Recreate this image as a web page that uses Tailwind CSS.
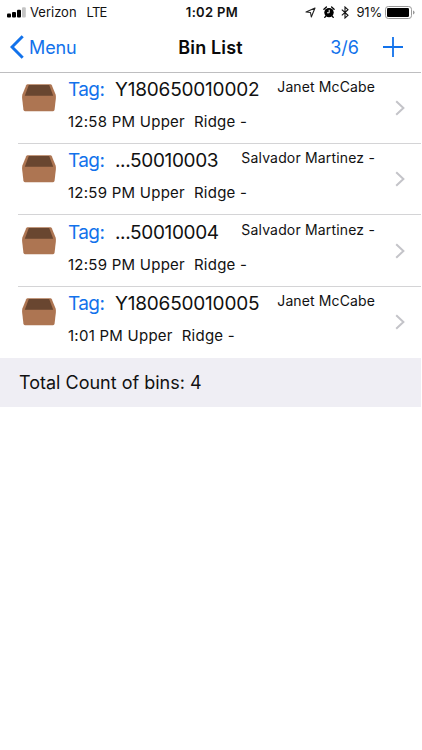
<!DOCTYPE html>
<html lang="en">
<head>
  <meta charset="UTF-8">
  <meta name="viewport" content="width=device-width, initial-scale=1.0">
  <title>Bin List</title>
  <script src="https://cdn.jsdelivr.net/npm/@tailwindcss/browser@4"></script>
</head>
<body class="bg-white text-[#111] font-['Inter',sans-serif]">
  <svg class="hidden">
    <symbol id="bin" viewBox="0 0 34 28">
      <path d="M5.6 0.3H28.4Q29.4 0.3 29.8 1.2L33.6 10.6Q34 12 33.9 14L32.6 25.6Q32.4 27.3 31 27.3H3Q1.6 27.3 1.4 25.6L0.1 14Q0 12 0.4 10.6L4.2 1.2Q4.6 0.3 5.6 0.3Z" fill="#ad7552"/>
      <path d="M6.8 1H27.2L31.2 11.8H2.8Z" fill="#694630"/>
    </symbol>
    <symbol id="chevron" viewBox="0 0 10 16">
      <path d="M1.2 1.2L8.4 8L1.2 14.8" fill="none" stroke="#c4c4c9" stroke-width="2"/>
    </symbol>
  </svg>

  <div class="w-[421px]">
    <!-- status bar -->
    <div class="grid grid-cols-[1fr_auto_1fr] items-center h-6 px-[7px] text-[13px] leading-6">
      <div class="flex items-center">
        <svg class="w-[19px] h-[11px] mr-[4px]" viewBox="0 0 19 11">
          <rect x="0" y="6.5" width="4" height="4" rx="1" fill="#000"/>
          <rect x="5" y="5" width="4" height="5.5" rx="1" fill="#000"/>
          <rect x="10" y="2.8" width="4" height="7.7" rx="1" fill="#000"/>
          <rect x="15" y="0.2" width="3.8" height="10.3" rx="1" fill="#c4c4c4"/>
        </svg>
        <span class="mr-[10px]">Verizon</span>
        <span class="tracking-[-0.8px]">LTE</span>
      </div>
      <span class="font-semibold tracking-[0.35px] pl-[3px]">1:02 PM</span>
      <div class="flex items-center justify-end -mr-px">
        <svg class="w-[11px] h-[11px] mr-[7px]" viewBox="0 0 11 11">
          <path d="M10 1L6.3 10L5.5 5.5L1 5Z" fill="none" stroke="#222" stroke-width="1.1" stroke-linejoin="round"/>
        </svg>
        <svg class="w-[12px] h-[12px] mr-[6px]" viewBox="0 0 12 12">
          <circle cx="6" cy="6.6" r="4.7"/>
          <path d="M0.9 3.2L3.4 1M11.1 3.2L8.6 1M2.7 10.2L1.8 11.4M9.3 10.2L10.2 11.4" stroke="#000" stroke-width="1.3" stroke-linecap="round"/>
          <path d="M6.2 3.8V6.8H4" fill="none" stroke="#fff" stroke-width="1"/>
        </svg>
        <svg class="w-[8px] h-[13px] mr-[7px]" viewBox="0 0 8 13">
          <path d="M0.8 3.6L7 9.3L4 12V1L7 3.7L0.8 9.4" fill="none" stroke="#111" stroke-width="1.1"/>
        </svg>
        <span class="tracking-[-0.2px] mr-[3px]">91%</span>
        <svg class="w-[30px] h-[13px]" viewBox="0 0 30 13">
          <rect x="0.5" y="0.5" width="26" height="12" rx="2.8" fill="none" stroke="#999"/>
          <rect x="2" y="2" width="22" height="9" rx="1.3"/>
          <path d="M28 4.4Q29.6 5 29.6 6.5T28 8.6Z" fill="#999"/>
        </svg>
      </div>
    </div>

    <!-- navigation bar -->
    <div class="grid grid-cols-[1fr_auto_1fr] items-center h-[49px] pl-[10px] pr-[18px] pb-[2px] border-b border-[#bebec0] text-[18px] text-[#1272eb]">
      <div class="flex items-center">
        <svg class="w-[14px] h-[24px] mr-[5px]" viewBox="0 0 14 24">
          <path d="M12.7 1.3L2 12L12.7 22.7" fill="none" stroke="currentColor" stroke-width="3"/>
        </svg>
        <span class="tracking-[-0.1px]">Menu</span>
      </div>
      <span class="pl-[8px] font-semibold text-[#0a0a0a] tracking-[0.15px]">Bin List</span>
      <div class="flex items-center justify-end">
        <span class="mr-[24px]">3/6</span>
        <svg class="w-[20px] h-[20px]" viewBox="0 0 20 20">
          <path d="M10 0V20M0 10H20" stroke="currentColor" stroke-width="1.8"/>
        </svg>
      </div>
    </div>

    <!-- bins -->
    <div id="bins">
      <div class="flex h-[70px] pl-[22px]">
        <svg class="w-[34px] h-[28px] mt-[11px] mr-[12px]"><use href="#bin"/></svg>
        <div class="w-[307px]">
          <div class="flex h-[32px] leading-[34px] text-[19px]">
            <span class="w-[47px] text-[#1272eb] tracking-[-0.6px]">Tag:</span>
            <span class="tracking-[-0.2px]">Y180650010002</span>
            <span class="ml-auto text-[14px] leading-[27px] tracking-[0.12px]">Janet McCabe</span>
          </div>
          <div class="text-[15px] leading-[33px] tracking-[0.25px]">12:58 PM Upper&nbsp; Ridge -</div>
        </div>
        <svg class="w-[10px] h-[16px] mt-[27px] ml-[20px]"><use href="#chevron"/></svg>
      </div>
      <div class="flex h-[71px] ml-[18px] pl-[4px] border-t border-[#d4d4d6]">
        <svg class="w-[34px] h-[28px] mt-[11px] mr-[12px]"><use href="#bin"/></svg>
        <div class="w-[307px]">
          <div class="flex h-[32px] leading-[34px] text-[19px]">
            <span class="w-[47px] text-[#1272eb] tracking-[-0.6px]">Tag:</span>
            <span class="tracking-[-0.35px]">...50010003</span>
            <span class="ml-auto text-[14px] leading-[27px] tracking-[0.17px]">Salvador Martinez -</span>
          </div>
          <div class="text-[15px] leading-[33px] tracking-[0.25px]">12:59 PM Upper&nbsp; Ridge -</div>
        </div>
        <svg class="w-[10px] h-[16px] mt-[27px] ml-[20px]"><use href="#chevron"/></svg>
      </div>
      <div class="flex h-[72px] ml-[18px] pl-[4px] pt-[0.5px] border-t border-[#d4d4d6]">
        <svg class="w-[34px] h-[28px] mt-[11px] mr-[12px]"><use href="#bin"/></svg>
        <div class="w-[307px]">
          <div class="flex h-[32px] leading-[34px] text-[19px]">
            <span class="w-[47px] text-[#1272eb] tracking-[-0.6px]">Tag:</span>
            <span class="tracking-[-0.35px]">...50010004</span>
            <span class="ml-auto text-[14px] leading-[27px] tracking-[0.17px]">Salvador Martinez -</span>
          </div>
          <div class="text-[15px] leading-[33px] tracking-[0.25px]">12:59 PM Upper&nbsp; Ridge -</div>
        </div>
        <svg class="w-[10px] h-[16px] mt-[27px] ml-[20px]"><use href="#chevron"/></svg>
      </div>
      <div class="flex h-[71.5px] ml-[18px] pl-[4px] border-t border-[#d4d4d6]">
        <svg class="w-[34px] h-[28px] mt-[11px] mr-[12px]"><use href="#bin"/></svg>
        <div class="w-[307px]">
          <div class="flex h-[32px] leading-[34px] text-[19px]">
            <span class="w-[47px] text-[#1272eb] tracking-[-0.6px]">Tag:</span>
            <span class="tracking-[-0.2px]">Y180650010005</span>
            <span class="ml-auto text-[14px] leading-[27px] tracking-[0.12px]">Janet McCabe</span>
          </div>
          <div class="text-[15px] leading-[33px] tracking-[0.25px]">1:01 PM Upper&nbsp; Ridge -</div>
        </div>
        <svg class="w-[10px] h-[16px] mt-[27px] ml-[20px]"><use href="#chevron"/></svg>
      </div>
    </div>

    <div class="h-[49px] pl-[19px] bg-[#efeef4] text-[18px] leading-[49px]">Total Count of bins: 4</div>
  </div>
</body>
</html>
